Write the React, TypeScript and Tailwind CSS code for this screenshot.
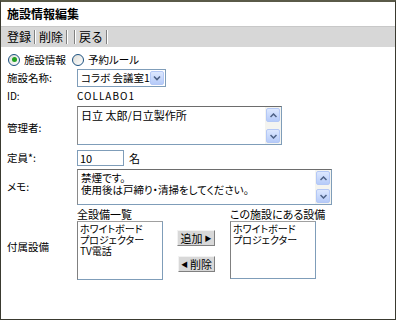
import { ReactNode } from "react";

const font = { fontFamily: '"Noto Sans CJK JP", "Liberation Sans", sans-serif' };

function ScrollArrow({ dir }: { dir: "up" | "down" }) {
  return (
    <div className="flex h-[14px] w-[14px] items-center justify-center rounded-[2px] border border-[#b4c8f6] bg-gradient-to-b from-[#dde8fe] to-[#b6cbf9]">
      <svg width="7" height="5" viewBox="0 0 7 5">
        {dir === "up" ? (
          <path d="M0.5 4 L3.5 1 L6.5 4" fill="none" stroke="#4d6185" strokeWidth="1.5" />
        ) : (
          <path d="M0.5 1 L3.5 4 L6.5 1" fill="none" stroke="#4d6185" strokeWidth="1.5" />
        )}
      </svg>
    </div>
  );
}

function FakeTextarea({ className, children }: { className: string; children: ReactNode }) {
  return (
    <div className={`flex border border-[#7f9db9] border-t-[#6d6d6d] border-l-[#8a8a8a] bg-white ${className}`}>
      <div className="flex-1 overflow-hidden whitespace-nowrap px-[3px] pt-[2px] leading-[12px]">{children}</div>
      <div className="flex w-[16px] flex-col justify-between bg-[#f4f4f0] py-[1px] pl-[1px]">
        <ScrollArrow dir="up" />
        <ScrollArrow dir="down" />
      </div>
    </div>
  );
}

function Radio({ checked }: { checked?: boolean }) {
  return (
    <span className="flex h-[12px] w-[12px] items-center justify-center rounded-full border border-[#1c5180] bg-gradient-to-br from-[#dcdcd7] to-white">
      {checked && <span className="h-[5px] w-[5px] rounded-full bg-[#21a121]" />}
    </span>
  );
}

function Btn({ children, className }: { children: ReactNode; className: string }) {
  return (
    <div
      className={`flex h-[16px] items-center justify-center whitespace-nowrap border border-[#f2f2f2] border-r-[#808080] border-b-[#808080] bg-[#d8d8d8] text-[11px] leading-none ${className}`}
    >
      {children}
    </div>
  );
}

function ToolSep() {
  return <span className="mx-[3px] h-[14px] w-[2px] border-l border-[#808080] border-r border-r-white" />;
}

function ListBox({ items, className }: { items: string[]; className: string }) {
  return (
    <div
      className={`w-[86px] overflow-hidden border border-[#7f9db9] border-l-[#808080] border-t-[#a0a0a0] bg-white px-[2px] pt-[1px] text-[10px] leading-[11px] ${className}`}
    >
      {items.map((item) => (
        <div key={item} className="h-[11px] whitespace-nowrap">
          {item}
        </div>
      ))}
    </div>
  );
}

export default function App() {
  return (
    <div
      className="h-[322px] w-[397px] bg-white text-[10.5px] leading-[12px] text-black [font-feature-settings:'palt']"
      style={font}
    >
      <div className="h-[320px] w-[396px] border border-[#3a3a30] border-t-2 border-t-[#5a5a48]">
        <div className="flex h-[24px] items-center pl-[6px] text-[12px] font-bold [font-feature-settings:normal]">
          施設情報編集
        </div>
        <div className="flex h-[21px] items-center border-t border-[#c8c8c8] bg-[#d7d7d7] pl-[6px] text-[12px] [font-feature-settings:normal]">
          <span>登録</span>
          <ToolSep />
          <span>削除</span>
          <ToolSep />
          <ToolSep />
          <span>戻る</span>
          <ToolSep />
        </div>

        <div className="pl-[6px] pt-[5px]">
          <div className="flex h-[15px] items-center pl-[1px]">
            <Radio checked />
            <span className="ml-[4px]">施設情報</span>
            <span className="ml-[6px]">
              <Radio />
            </span>
            <span className="ml-[4px]">予約ルール</span>
          </div>

          <div className="mt-[2px] flex h-[18px] items-center">
            <span className="w-[70px]">施設名称:</span>
            <div className="flex h-[18px] w-[89px] items-center whitespace-nowrap border border-[#7f9db9] bg-white pl-[3px]">
              <span className="flex-1 text-[10.5px]">コラボ 会議室1</span>
              <div className="mr-[1px] flex h-[14px] w-[14px] items-center justify-center rounded-[2px] border border-[#b4c8f6] bg-gradient-to-b from-[#dde8fe] to-[#b6cbf9]">
                <svg width="8" height="6" viewBox="0 0 8 6">
                  <path d="M1 1.5 L4 4.5 L7 1.5" fill="none" stroke="#4d6185" strokeWidth="1.6" />
                </svg>
              </div>
            </div>
          </div>

          <div className="mt-[2px] flex h-[14px] items-center">
            <span className="w-[70px] text-[10px]">ID:</span>
            <span className="text-[10px] tracking-[1px]">COLLABO1</span>
          </div>

          <div className="mt-[3px] flex h-[39px] items-center">
            <span className="w-[70px] pt-[4px]">管理者:</span>
            <FakeTextarea className="h-[39px] w-[205px]">
              <span className="text-[11px] [font-feature-settings:normal]">日立 太郎/日立製作所</span>
            </FakeTextarea>
          </div>

          <div className="mt-[5px] flex h-[16px] items-center">
            <span className="w-[70px]">定員*:</span>
            <div className="flex h-[16px] w-[47px] items-center border border-[#7f9db9] bg-white pl-[2px] text-[11px]">10</div>
            <span className="ml-[5px] text-[11px]">名</span>
          </div>

          <div className="mt-[3px] flex h-[36px] items-center">
            <span className="w-[70px]">メモ:</span>
            <FakeTextarea className="h-[36px] w-[255px]">
              <div>禁煙です。</div>
              <div>使用後は戸締り・清掃をしてください。</div>
            </FakeTextarea>
          </div>

          <div className="mt-[3px] flex">
            <span className="w-[70px] pt-[33px]">付属設備</span>
            <div className="flex flex-col">
              <span className="h-[13px] text-[11px] leading-[13px]">全設備一覧</span>
              <ListBox className="h-[59px]" items={["ホワイトボード", "プロジェクター", "TV電話"]} />
            </div>
            <div className="flex flex-col pl-[14px] pt-[22px]">
              <Btn className="w-[38px]">
                追加<span className="ml-[2px] text-[7px]">▶</span>
              </Btn>
              <Btn className="ml-[1px] mt-[10px] w-[37px]">
                <span className="mr-[2px] text-[7px]">◀</span>削除
              </Btn>
            </div>
            <div className="ml-[15px] flex flex-col">
              <span className="h-[13px] text-[11px] leading-[13px]">この施設にある設備</span>
              <ListBox className="h-[58px]" items={["ホワイトボード", "プロジェクター"]} />
            </div>
          </div>
        </div>
      </div>
    </div>
  );
}
